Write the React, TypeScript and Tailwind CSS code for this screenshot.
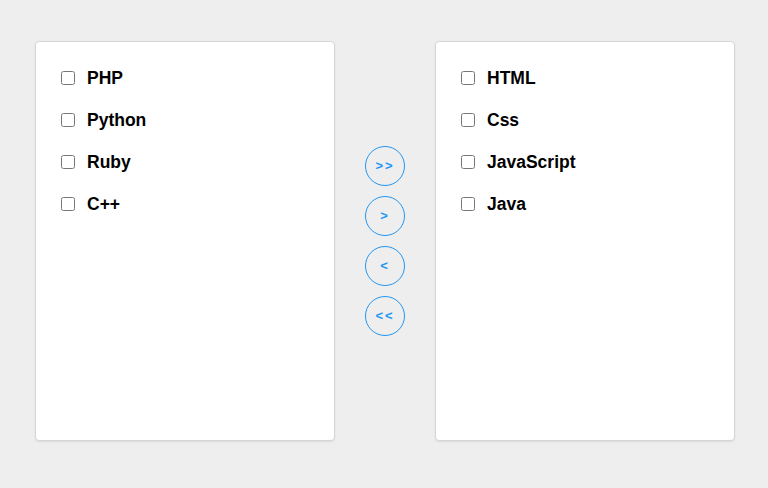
import React from "react";

const leftItems = ["PHP", "Python", "Ruby", "C++"];
const rightItems = ["HTML", "Css", "JavaScript", "Java"];
const actions = [">>", ">", "<", "<<"];

const ListCard = ({ items }: { items: string[] }) => {
  return (
    <div className="h-[400px] w-[300px] rounded-[4px] border border-[#d6d6d6] bg-white px-[25px] pt-[15px] shadow-[0_1px_2px_rgba(0,0,0,0.08)]">
      {items.map((item) => (
        <label key={item} className="flex h-[42px] items-center gap-[12px]">
          <input type="checkbox" className="m-0 h-[14px] w-[14px]" />
          <span className="text-[17.5px] font-bold text-black">{item}</span>
        </label>
      ))}
    </div>
  );
};

export default function App() {
  return (
    <div
      className="flex h-[488px] w-[768px] items-center justify-center gap-[30px] bg-[#eeeeee] pb-[6px] pl-[2px]"
      style={{ fontFamily: '"Liberation Sans", Arial, sans-serif' }}
    >
      <ListCard items={leftItems} />
      <div className="flex flex-col gap-[10px]">
        {actions.map((a) => (
          <button
            key={a}
            className="flex h-[40px] w-[40px] items-center justify-center rounded-full border border-[#2196f3] bg-transparent text-[13px] font-bold tracking-[2px] text-[#2196f3]"
          >
            {a}
          </button>
        ))}
      </div>
      <ListCard items={rightItems} />
    </div>
  );
}
